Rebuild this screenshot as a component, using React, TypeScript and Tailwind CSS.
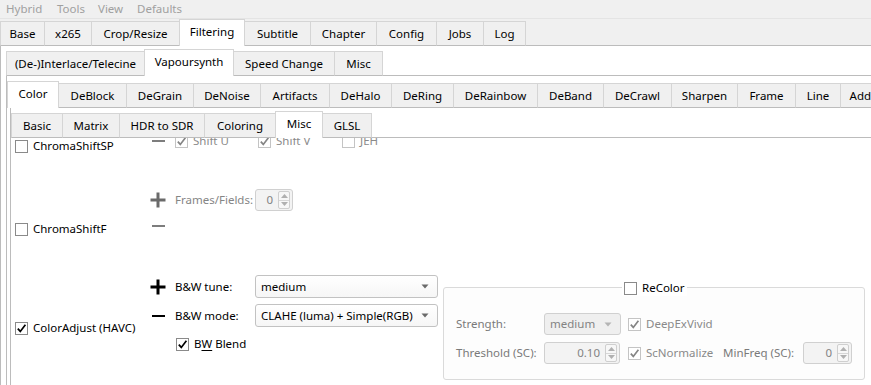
import clsx from "clsx";

type TabDef = [string, string];

const mainTabs: TabDef[] = [
  ["Base", "w-[44px]"],
  ["x265", "w-[47px]"],
  ["Crop/Resize", "w-[88px]"],
  ["Filtering", "w-[66px]"],
  ["Subtitle", "w-[65px]"],
  ["Chapter", "w-[66px]"],
  ["Config", "w-[60px]"],
  ["Jobs", "w-[47px]"],
  ["Log", "w-[43px]"],
];

const filterTabs: TabDef[] = [
  ["(De-)Interlace/Telecine", "w-[138px]"],
  ["Vapoursynth", "w-[90px]"],
  ["Speed Change", "w-[100px]"],
  ["Misc", "w-[49px]"],
];

const vsTabs: TabDef[] = [
  ["Color", "w-[52px]"],
  ["DeBlock", "w-[67px]"],
  ["DeGrain", "w-[67px]"],
  ["DeNoise", "w-[67px]"],
  ["Artifacts", "w-[69px]"],
  ["DeHalo", "w-[62px]"],
  ["DeRing", "w-[62px]"],
  ["DeRainbow", "w-[84px]"],
  ["DeBand", "w-[66px]"],
  ["DeCrawl", "w-[68px]"],
  ["Sharpen", "w-[66px]"],
  ["Frame", "w-[58px]"],
  ["Line", "w-[45px]"],
  ["AddGrain", "w-[70px]"],
];

const colorTabs: TabDef[] = [
  ["Basic", "w-[51px]"],
  ["Matrix", "w-[57px]"],
  ["HDR to SDR", "w-[85px]"],
  ["Coloring", "w-[71px]"],
  ["Misc", "w-[48px]"],
  ["GLSL", "w-[49px]"],
];

function TabBar({ tabs, active, className }: { tabs: TabDef[]; active: number; className?: string }) {
  return (
    <div className={clsx("relative z-10 -mb-px flex h-[27px] shrink-0 items-end", className)}>
      {tabs.map(([label, w], i) => (
        <div
          key={label}
          className={clsx(
            "flex shrink-0 items-center justify-center whitespace-nowrap border-[#d5d5d5] text-black",
            w,
            i === active
              ? "h-[27px] border-x border-t bg-white pb-[2px]"
              : "h-[25px] border-t border-b border-b-[#bcbcbc] bg-[#f0f0f0]",
            i !== active && i !== active + 1 && "border-l",
            i !== active && i === tabs.length - 1 && "border-r",
          )}
        >
          {label}
        </div>
      ))}
    </div>
  );
}

function Check({ checked, disabled }: { checked?: boolean; disabled?: boolean }) {
  return (
    <span
      className={clsx(
        "flex h-[13px] w-[13px] shrink-0 items-center justify-center border bg-white",
        disabled ? "border-[#c4c4c4]" : "border-[#8a8a8a]",
      )}
    >
      {checked && (
        <svg width="11" height="11" viewBox="0 0 11 11">
          <path
            d="M1.8 5.6 L4.3 8.4 L9.4 1.8"
            fill="none"
            stroke={disabled ? "#858585" : "#000"}
            strokeWidth="1.7"
          />
        </svg>
      )}
    </span>
  );
}

function CheckLabel({ label, checked, disabled, className }: { label: React.ReactNode; checked?: boolean; disabled?: boolean; className?: string }) {
  return (
    <div className={clsx("flex h-[16px] items-center gap-[5px] whitespace-nowrap", disabled ? "text-[#8a8a8a]" : "text-black", className)}>
      <Check checked={checked} disabled={disabled} />
      <span>{label}</span>
    </div>
  );
}

function Plus({ color }: { color: string }) {
  return (
    <svg width="16" height="16" viewBox="0 0 16 16" className="shrink-0">
      <rect x="0.5" y="6.5" width="15" height="3" fill={color} />
      <rect x="6.5" y="0.5" width="3" height="15" fill={color} />
    </svg>
  );
}

function Minus({ color }: { color: string }) {
  return (
    <svg width="16" height="16" viewBox="0 0 16 16" className="shrink-0">
      <rect x="2" y="7" width="13" height="2" fill={color} />
    </svg>
  );
}

function Arrow({ color }: { color: string }) {
  return (
    <svg width="8" height="5" viewBox="0 0 8 5">
      <path d="M0.5 0.5 L7.5 0.5 L4 4.5 Z" fill={color} />
    </svg>
  );
}

function Combo({ value, disabled, className }: { value: string; disabled?: boolean; className?: string }) {
  return (
    <div
      className={clsx(
        "flex h-full items-center justify-between rounded-[3px] border pl-[5px] pr-[8px] whitespace-nowrap",
        disabled
          ? "border-[#d0d0d0] bg-[#efefef] text-[#838383]"
          : "border-[#c2c2c2] bg-gradient-to-b from-white to-[#f6f6f6] text-black",
        className,
      )}
    >
      <span>{value}</span>
      <Arrow color={disabled ? "#b4b4b4" : "#6a6a6a"} />
    </div>
  );
}

function Spin({ value, className }: { value: string; className?: string }) {
  return (
    <div className={clsx("flex h-full items-center rounded-[3px] border border-[#d0d0d0] bg-[#f3f3f3] text-[#838383]", className)}>
      <span className="flex-1 pr-[5px] text-right">{value}</span>
      <div className="mr-[2px] flex h-[18px] w-[12px] flex-col overflow-hidden rounded-[2px] border border-[#cfcfcf] bg-[#f7f7f7]">
        <div className="flex flex-1 items-center justify-center border-b border-[#d6d6d6]">
          <svg width="7" height="4" viewBox="0 0 7 4">
            <path d="M0 4 L3.5 0 L7 4 Z" fill="#b0b0b0" />
          </svg>
        </div>
        <div className="flex flex-1 items-center justify-center">
          <svg width="7" height="4" viewBox="0 0 7 4">
            <path d="M0 0 L7 0 L3.5 4 Z" fill="#b0b0b0" />
          </svg>
        </div>
      </div>
    </div>
  );
}

function ReColorGroup() {
  return (
    <div className="relative mt-[149px] h-[93px] w-[422px] shrink-0 rounded-[3px] border border-[#dadada] bg-[#fdfdfd] pl-[12px] pt-[25px] text-[#7a7a7a]">
      <div className="absolute -top-[8px] left-[178px] bg-white px-[2px]">
        <CheckLabel label="ReColor" />
      </div>
      <div className="flex h-[22px] items-center">
        <span className="w-[88px]">Strength:</span>
        <Combo value="medium" disabled className="w-[77px]" />
        <CheckLabel label="DeepExVivid" checked disabled className="ml-[7px] text-[#7a7a7a]" />
      </div>
      <div className="mt-[7px] flex h-[22px] items-center">
        <span className="w-[88px] whitespace-nowrap">Threshold (SC):</span>
        <Spin value="0.10" className="w-[76px]" />
        <CheckLabel label="ScNormalize" checked disabled className="ml-[8px] w-[95px] text-[#7a7a7a]" />
        <span className="w-[80px] whitespace-nowrap">MinFreq (SC):</span>
        <Spin value="0" className="w-[49px]" />
      </div>
    </div>
  );
}

function MiscContent() {
  return (
    <div className="flex h-[247px] overflow-hidden border-t border-[#bcbcbc] bg-white">
      <div className="flex w-[139px] shrink-0 flex-col pl-[4px]">
        <CheckLabel label="ChromaShiftSP" />
        <CheckLabel label="ChromaShiftF" className="mt-[67px]" />
        <CheckLabel label="ColorAdjust (HAVC)" checked className="mt-[83px]" />
      </div>

      <div className="flex w-[293px] shrink-0 flex-col">
        <div className="-mt-[5px] flex h-[16px] items-center">
          <Minus color="#7d7d7d" />
          <CheckLabel label="Shift U" checked disabled className="ml-[9px] w-[83px]" />
          <CheckLabel label="Shift V" checked disabled className="w-[84px]" />
          <CheckLabel label="JEH" disabled />
        </div>
        <div className="mt-[40px] flex h-[22px] items-center">
          <Plus color="#6a6a6a" />
          <span className="ml-[9px] w-[80px] text-[#858585]">Frames/Fields:</span>
          <Spin value="0" className="w-[38px]" />
        </div>
        <div className="mt-[7px] flex h-[16px] items-center">
          <Minus color="#7d7d7d" />
        </div>
        <div className="mt-[41px] flex h-[23px] items-center">
          <Plus color="#000" />
          <span className="ml-[9px] w-[80px]">B&amp;W tune:</span>
          <Combo value="medium" className="w-[183px]" />
        </div>
        <div className="mt-[6px] flex h-[23px] items-center">
          <Minus color="#000" />
          <span className="ml-[9px] w-[80px]">B&amp;W mode:</span>
          <Combo value="CLAHE (luma) + Simple(RGB)" className="w-[183px]" />
        </div>
        <CheckLabel
          label={
            <>
              B<span className="underline underline-offset-2">W</span> Blend
            </>
          }
          checked
          className="ml-[26px] mt-[9px]"
        />
      </div>

      <ReColorGroup />
    </div>
  );
}

export default function App() {
  return (
    <div className="flex h-[385px] w-[871px] flex-col overflow-hidden bg-[#f0f0f0] font-['Noto_Sans',sans-serif] text-[11.5px] text-black">
      <div className="flex h-[19px] shrink-0 items-center border-b border-[#e4e4e4] pl-[6px] text-[#a0a0a0]">
        <span className="w-[51px]">Hybrid</span>
        <span className="w-[41px]">Tools</span>
        <span className="w-[39px]">View</span>
        <span>Defaults</span>
      </div>

      <TabBar tabs={mainTabs} active={3} />
      <div className="flex flex-1 flex-col border-l border-t border-[#bcbcbc] bg-white pl-[5px] pt-[3px]">
        <TabBar tabs={filterTabs} active={1} />
        <div className="flex flex-1 flex-col border-l border-t border-[#bcbcbc] pl-[3px] pt-[5px]">
          <TabBar tabs={vsTabs} active={0} className="-ml-[3px]" />
          <div className="flex flex-1 flex-col border-l border-t border-[#bcbcbc] pt-[3px]">
            <TabBar tabs={colorTabs} active={4} />
            <MiscContent />
          </div>
        </div>
      </div>
    </div>
  );
}
